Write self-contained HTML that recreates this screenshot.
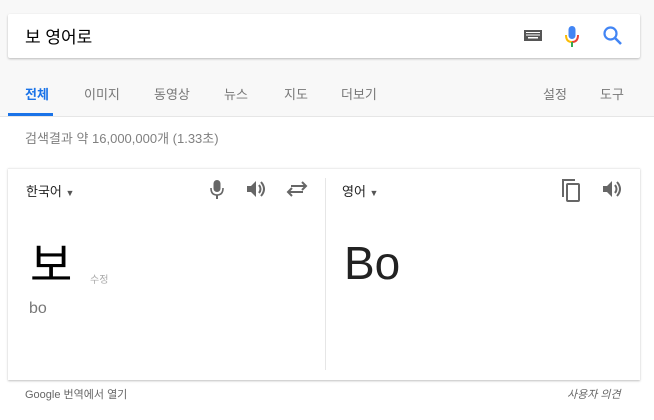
<!DOCTYPE html>
<html><head><meta charset="utf-8"><style>
body{margin:0;width:654px;height:420px;background:#fff;font-family:"Liberation Sans","Noto Sans CJK KR",sans-serif;position:relative;overflow:hidden}
.top{position:absolute;left:0;top:0;width:654px;height:116px;background:#f8f8f8;border-bottom:1px solid #e6e6e6}
.sb{position:absolute;left:8px;top:14px;width:632px;height:44px;background:#fff;border-radius:2px;box-shadow:0 1px 2px rgba(0,0,0,.25)}
.q{position:absolute;left:17px;top:9px;font-size:17px;color:#000}
.t{position:absolute;top:84px;font-size:13px;color:#777}
.a{position:absolute;font-size:13px}
.card{position:absolute;left:8px;top:168px;width:632px;height:211px;background:#fff;box-shadow:0 1px 2px rgba(0,0,0,.25);border-top:1px solid #eee}
</style></head><body>
<div class="top">
 <div class="sb"><div class="q">보 영어로</div>
  <svg style="position:absolute;left:515px;top:15px" width="20" height="13"><rect x="1" y="1" width="18" height="11" fill="#555"/><g fill="#fff"><rect x="3" y="3" width="14" height="1"/><rect x="3" y="5.5" width="14" height="1"/><rect x="5" y="8" width="10" height="1.5"/></g></svg>
  <svg style="position:absolute;left:555px;top:11px" width="18" height="24"><rect x="5.5" y="1" width="7" height="13" rx="3.5" fill="#4285f4"/><path d="M3 10 Q3 17 9 17" stroke="#fbbc05" stroke-width="2" fill="none"/><path d="M15 10 Q15 17 9 17" stroke="#ea4335" stroke-width="2" fill="none"/><rect x="8" y="17" width="2" height="5" fill="#34a853"/></svg>
  <svg style="position:absolute;left:594px;top:11px" width="22" height="22"><circle cx="8.5" cy="8.5" r="6" stroke="#4285f4" stroke-width="2.2" fill="none"/><path d="M13 13 L19 19" stroke="#4285f4" stroke-width="2.6"/></svg>
 </div>
 <div class="t" style="left:25px;color:#1a73e8;font-weight:bold">전체</div>
 <div style="position:absolute;left:8px;top:113px;width:45px;height:3px;background:#1a73e8"></div>
 <div class="t" style="left:84px">이미지</div>
 <div class="t" style="left:154px">동영상</div>
 <div class="t" style="left:224px">뉴스</div>
 <div class="t" style="left:284px">지도</div>
 <div class="t" style="left:341px">더보기</div>
 <div class="t" style="left:543px">설정</div>
 <div class="t" style="left:600px">도구</div>
</div>
<div class="a" style="left:25px;top:128px;color:#808080">검색결과 약 16,000,000개 (1.33초)</div>
<div class="card">
 <div class="a" style="left:18px;top:12px;color:#222">한국어 <span style="font-size:9px;color:#555">▼</span></div>
 <svg style="position:absolute;left:202px;top:11px" width="14" height="20"><rect x="3.5" y="0" width="7" height="12" rx="3.5" fill="#666"/><path d="M1 8 Q1 15 7 15 Q13 15 13 8" stroke="#666" stroke-width="1.6" fill="none"/><rect x="6" y="15" width="2" height="4" fill="#666"/></svg>
 <svg style="position:absolute;left:238px;top:10px" width="22" height="20"><path d="M1 7h4l5-5v16l-5-5H1z" fill="#666"/><path d="M13 6Q16 10 13 14" stroke="#666" stroke-width="2" fill="none"/><path d="M15 3Q21 10 15 17" stroke="#666" stroke-width="2" fill="none"/></svg>
 <svg style="position:absolute;left:278px;top:12px" width="22" height="16"><path d="M2 11h15M6 7 2 11l4 4M20 5H5M16 1l4 4-4 4" stroke="#666" stroke-width="2" fill="none"/></svg>
 <div style="position:absolute;left:317px;top:9px;width:1px;height:192px;background:#e6e6e6"></div>
 <div class="a" style="left:334px;top:12px;color:#222">영어 <span style="font-size:9px;color:#555">▼</span></div>
 <svg style="position:absolute;left:552px;top:8px" width="22" height="26"><path d="M3 20V3h12" stroke="#666" stroke-width="2" fill="none"/><rect x="7" y="7" width="12" height="17" rx="1" stroke="#666" stroke-width="2" fill="none"/></svg>
 <svg style="position:absolute;left:594px;top:10px" width="22" height="20"><path d="M1 7h4l5-5v16l-5-5H1z" fill="#666"/><path d="M13 6Q16 10 13 14" stroke="#666" stroke-width="2" fill="none"/><path d="M15 3Q21 10 15 17" stroke="#666" stroke-width="2" fill="none"/></svg>
 <div class="a" style="left:22px;top:73px;font-size:46px;color:#000;line-height:1">보</div>
 <div class="a" style="left:82px;top:102px;font-size:10px;color:#aaa">수정</div>
 <div class="a" style="left:21px;top:131px;font-size:16px;color:#777">bo</div>
 <div class="a" style="left:336px;top:71px;font-size:46px;color:#222;line-height:1">Bo</div>
</div>
<div class="a" style="left:25px;top:386px;font-size:11px;color:#666">Google 번역에서 열기</div>
<div class="a" style="left:567px;top:386px;font-size:11px;color:#666;font-style:italic">사용자 의견</div>
</body></html>
